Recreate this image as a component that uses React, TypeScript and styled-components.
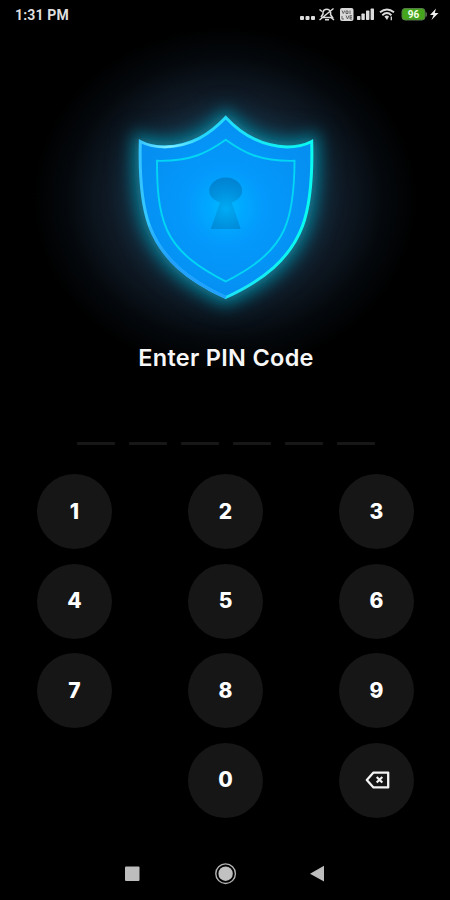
import React from "react";
import styled, { createGlobalStyle } from "styled-components";

const GlobalStyle = createGlobalStyle`
  * { box-sizing: border-box; }
  body { margin: 0; background: #000; }
`;

const Screen = styled.main`
  width: 450px;
  height: 900px;
  display: flex;
  flex-direction: column;
  background: #000;
  color: #fff;
  font-family: Inter, "Liberation Sans", sans-serif;
  overflow: hidden;
`;

const StatusBar = styled.header`
  height: 30px;
  flex: none;
  display: flex;
  justify-content: space-between;
  align-items: center;
  padding: 0 10px 0 15px;
`;

const Clock = styled.span`
  font: 700 14px/18px Roboto, sans-serif;
  letter-spacing: 0.15px;
  color: #dedede;
`;

const StatusIcons = styled.svg`
  display: block;
  width: 142px;
  height: 30px;
`;

const Battery = styled.text`
  font: 700 10px Roboto, sans-serif;
  fill: #f2ffe9;
`;

const Hero = styled.svg`
  display: block;
  flex: none;
  width: 450px;
  height: 310px;
  overflow: visible;
`;

const Title = styled.h1`
  margin: 0;
  height: 35px;
  font-size: 23.5px;
  line-height: 36px;
  font-weight: 600;
  letter-spacing: 0.3px;
  text-align: center;
  padding-left: 2px;
  color: #f7f7f7;
`;

const PinSlots = styled.div`
  display: flex;
  justify-content: center;
  gap: 14px;
  height: 3px;
  margin: 67px 0 30px;
  padding-left: 1px;
`;

const Slot = styled.span`
  width: 38px;
  height: 3px;
  border-radius: 1px;
  background: #171717;
`;

const Keypad = styled.section`
  display: grid;
  grid-template-columns: repeat(3, 75px);
  grid-auto-rows: 75px;
  justify-content: space-between;
  row-gap: 14.6px;
  padding: 0 36px 0 37px;
  margin-top: -1px;
`;

const Key = styled.button<{ $column?: number }>`
  display: flex;
  align-items: center;
  justify-content: center;
  padding: 0;
  border: 0;
  border-radius: 50%;
  background: #161616;
  color: #fff;
  font: 800 21px/24px Inter, sans-serif;
  ${({ $column }) => $column && `grid-column: ${$column};`}
`;

const DeleteIcon = styled.svg`
  width: 28px;
  height: 24px;
  margin-left: 2px;
`;

const NavBar = styled.nav`
  display: flex;
  flex: none;
  height: 52px;
  margin-top: auto;
`;

const NavIcons = styled.svg`
  width: 450px;
  height: 52px;
`;

const OUTER =
  "M225.7 117.5 C210 134 192 146 165 147 C155 147 147 145 140.3 141.5 C139.5 172 141 203 149.5 226 C162 259 188 280 225.7 297.5 C263.5 280 290 259 302.5 226 C311 203 312.5 172 311.7 141.5 C305 145 297 147 287 147 C260 146 241 134 225.7 117.5Z";
const INNER =
  "M225.7 139.8 C207 153 191 161.5 157 160.8 C157 185 158 210 167 230 C178 254 201 269 225.7 281.5 C250 269 273 254 284 230 C293 210 294.5 185 294.5 160.8 C260 161.5 244 153 225.7 139.8Z";
const KEYHOLE =
  "M220 202.5 C213 200 209.2 196 209.2 190.8 C209.2 183.5 216.5 177.5 225.7 177.5 C235 177.5 242.2 183.5 242.2 190.8 C242.2 196 238.5 200 231.8 202.5 L240.7 229 H210.8Z";

const Shield = () => (
  <Hero viewBox="0 30 450 310" aria-label="Security shield">
    <defs>
      <radialGradient id="halo">
        <stop offset="0" stopColor="#1c3144" />
        <stop offset=".48" stopColor="#152433" />
        <stop offset=".65" stopColor="#0d1620" />
        <stop offset=".83" stopColor="#04080c" />
        <stop offset="1" stopColor="#000" />
      </radialGradient>
      <radialGradient id="face" gradientUnits="userSpaceOnUse" cx="226" cy="207" r="92">
        <stop offset="0" stopColor="#00b9ff" />
        <stop offset=".18" stopColor="#00a9ff" />
        <stop offset=".42" stopColor="#0499fc" />
        <stop offset="1" stopColor="#058ff1" />
      </radialGradient>
      <linearGradient id="edge" gradientUnits="userSpaceOnUse" x1="140" y1="190" x2="312" y2="210">
        <stop offset="0" stopColor="#35c4ff" />
        <stop offset=".45" stopColor="#22dcfa" />
        <stop offset="1" stopColor="#08fbef" />
      </linearGradient>
      <linearGradient id="lower" gradientUnits="userSpaceOnUse" x1="0" y1="205" x2="0" y2="290">
        <stop offset="0" stopColor="#239fff" stopOpacity="0" />
        <stop offset=".65" stopColor="#239fff" />
      </linearGradient>
      <linearGradient id="shine" gradientUnits="userSpaceOnUse" x1="140" y1="0" x2="200" y2="0">
        <stop offset="0" stopColor="#83efff" stopOpacity="0" />
        <stop offset=".5" stopColor="#83efff" />
        <stop offset="1" stopColor="#83efff" stopOpacity="0" />
      </linearGradient>
      <radialGradient id="hole" gradientUnits="userSpaceOnUse" cx="226" cy="209" r="31">
        <stop offset="0" stopColor="#00abf5" />
        <stop offset=".55" stopColor="#0092df" />
        <stop offset="1" stopColor="#0082d2" />
      </radialGradient>
      <filter id="wide" x="-40%" y="-40%" width="180%" height="180%">
        <feGaussianBlur stdDeviation="15" />
      </filter>
      <filter id="near" x="-25%" y="-25%" width="150%" height="150%">
        <feGaussianBlur stdDeviation="8" />
      </filter>
    </defs>
    <ellipse cx="225" cy="199" rx="192" ry="172" fill="url(#halo)" />
    <path d={OUTER} fill="#086a8c" stroke="#086a8c" strokeWidth="8" opacity=".55" filter="url(#wide)" />
    <path d={OUTER} fill="#088ca4" stroke="#088ca4" strokeWidth="12" opacity=".85" filter="url(#near)" />
    <path d={OUTER} fill="url(#face)" stroke="url(#edge)" strokeWidth="3" />
    <path d="M149.5 226 C162 259 188 280 225.7 297.5" fill="none" stroke="url(#lower)" strokeWidth="3" />
    <path d="M140.3 141.5 C147 145 155 147 165 147 C178 146.5 189 143.5 199 139" fill="none" stroke="url(#shine)" strokeWidth="2.4" />
    <path d={INNER} fill="none" stroke="#03d5f5" strokeWidth="1.9" />
    <path d={KEYHOLE} fill="url(#hole)" />
  </Hero>
);

const StatusGlyphs = () => (
  <StatusIcons viewBox="298 0 142 30" fill="none" stroke="#dcdcdc">
    <g fill="#dcdcdc" stroke="none">
      <rect x="300" y="16" width="4" height="4" rx="1" />
      <rect x="305.5" y="16" width="4" height="4" rx="1" />
      <rect x="311" y="16" width="4" height="4" rx="1" />
    </g>
    <path d="M321 17 L323 14 V12 Q324 8.8 328 9.4 Q331.5 11 330.5 14.5 L332.5 17.5 H321 M325 19.8 H329 M319.5 20 L333.5 8.5 M319.5 9.5 L322 11.5 M331.5 18 L334 20" strokeWidth="1.5" />
    <rect x="340" y="8" width="13.5" height="13" rx="2" fill="#d8d8d8" stroke="none" />
    <path d="M342 10.5 L343.3 13.5 L344.8 10.5 M346 11 H348 V13.5 H346Z M350 10.5 V14 M342 16 V19 H344 M346 15.5 L347.5 19 L349 15.5 M352 15.7 H350 V19 H352 M350 17.3 H352" stroke="#555" strokeWidth=".9" />
    <g fill="#dcdcdc" stroke="none">
      <rect x="357" y="16" width="3.4" height="4" rx=".7" />
      <rect x="361.4" y="13.5" width="3.4" height="6.5" rx=".7" />
      <rect x="366" y="10.5" width="3.4" height="9.5" rx=".7" />
      <rect x="370.6" y="8.5" width="3.4" height="11.5" rx=".7" />
    </g>
    <path d="M380 12.3 Q387 6.7 394 12.3 M382.3 15.2 Q387 11 391.4 15.2" strokeWidth="1.9" />
    <path d="M384.4 16.5 Q387 14.5 389 16.5 L387 20Z" fill="#dcdcdc" stroke="none" />
    <path d="M391.3 16.5 V20.3" strokeWidth="1.3" />
    <rect x="402" y="8.5" width="23" height="11.5" rx="3" fill="#45a51c" stroke="#557a48" strokeWidth="1" />
    <path d="M426.2 12.5 V16.5" stroke="#66765f" strokeWidth="1.3" />
    <Battery x="413.5" y="17.8" textAnchor="middle" stroke="none">96</Battery>
    <path d="M436 8.5 L430 15 H433.5 L431.5 20 L438.5 13 H434.8Z" fill="#eee" stroke="none" />
  </StatusIcons>
);

const App = () => (
  <>
    <GlobalStyle />
    <Screen>
      <StatusBar><Clock>1:31 PM</Clock><StatusGlyphs /></StatusBar>
      <Shield />
      <Title>Enter PIN Code</Title>
      <PinSlots>{Array.from({ length: 6 }, (_, i) => <Slot key={i} />)}</PinSlots>
      <Keypad>
        {Array.from({ length: 9 }, (_, i) => <Key key={i}>{i + 1}</Key>)}
        <Key $column={2}>0</Key>
        <Key aria-label="Delete">
          <DeleteIcon viewBox="0 0 28 24" fill="none" stroke="#f4f4f4">
            <path d="M9.5 4.6 H24.2 V19.4 H9.5 L2.8 12Z" strokeWidth="2.3" strokeLinejoin="round" />
            <path d="M12.7 9 L18.3 14.5 M18.3 9 L12.7 14.5" strokeWidth="2.2" />
          </DeleteIcon>
        </Key>
      </Keypad>
      <NavBar>
        <NavIcons viewBox="0 848 450 52" aria-label="System navigation">
          <rect x="125" y="866.5" width="14.5" height="14.5" rx="1" fill="#bdbdbd" />
          <circle cx="225.6" cy="873.7" r="9.8" fill="none" stroke="#b4b4b4" strokeWidth="1.4" />
          <circle cx="225.6" cy="873.7" r="7.2" fill="#c1c1c1" />
          <path d="M310 873.7 L324 865.8 V881.6Z" fill="#bdbdbd" />
        </NavIcons>
      </NavBar>
    </Screen>
  </>
);

export default App;
